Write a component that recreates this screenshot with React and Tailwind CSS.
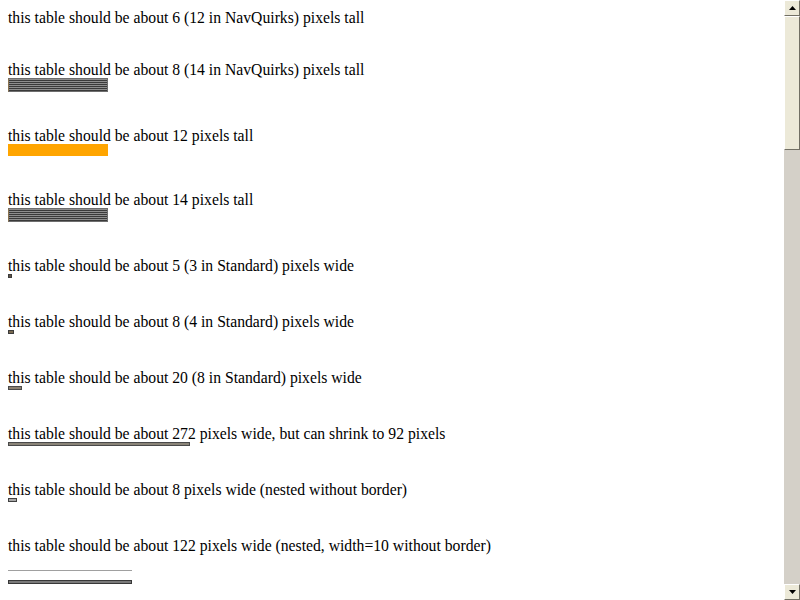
const stripes =
  "bg-[image:repeating-linear-gradient(to_bottom,#8e8e8e_0px,#8e8e8e_1px,#3a3a3a_1px,#3a3a3a_2px)]";

const Line = ({ children }) => (
  <p className="leading-[17px] whitespace-nowrap">{children}</p>
);

const Arrow = ({ down }) => (
  <svg width="7" height="4" viewBox="0 0 7 4" className="block">
    <path d={down ? "M0 0H7L3.5 4Z" : "M0 4H7L3.5 0Z"} fill="#000" />
  </svg>
);

const ScrollButton = ({ down }) => (
  <div className="h-[16px] w-[16px] flex items-center justify-center bg-[#ece9d8] border border-t-white border-l-white border-r-[#716f64] border-b-[#716f64]">
    <Arrow down={down} />
  </div>
);

const Scrollbar = () => (
  <div className="w-[16px] h-full flex flex-col bg-[#d4d0c8]">
    <ScrollButton />
    <div className="h-[134px] bg-[#ece9d8] border border-t-white border-l-white border-r-[#716f64] border-b-[#716f64]" />
    <div className="flex-1" />
    <ScrollButton down />
  </div>
);

export default function App() {
  return (
    <div className="w-[800px] h-[600px] flex overflow-hidden bg-white">
      <div className="flex-1 pl-2 pt-[9px] text-[15.7px] text-black font-['Liberation_Serif',serif]">
        <div className="mb-[35px]">
          <Line>this table should be about 6 (12 in NavQuirks) pixels tall</Line>
        </div>

        <div className="mb-[35px]">
          <Line>this table should be about 8 (14 in NavQuirks) pixels tall</Line>
          <div className={`w-[100px] h-[14px] border border-[#6e6e6e] border-l-[#8a7350] ${stripes}`} />
        </div>

        <div className="mb-[35px]">
          <Line>this table should be about 12 pixels tall</Line>
          <div className="w-[100px] h-[12px] bg-[#ffa500]" />
        </div>

        <div className="mb-[35px]">
          <Line>this table should be about 14 pixels tall</Line>
          <div className={`w-[100px] h-[14px] border border-[#6e6e6e] border-l-[#8a7350] ${stripes}`} />
        </div>

        <div className="mb-[35px]">
          <Line>this table should be about 5 (3 in Standard) pixels wide</Line>
          <div className="w-[4px] h-[4px] bg-[#5e5244] border border-[#3c3c3c]" />
        </div>

        <div className="mb-[35px]">
          <Line>this table should be about 8 (4 in Standard) pixels wide</Line>
          <div className="w-[6px] h-[4px] bg-[#7a6a50] border border-[#3c3c3c]" />
        </div>

        <div className="mb-[35px]">
          <Line>this table should be about 20 (8 in Standard) pixels wide</Line>
          <div className="w-[14px] h-[4px] bg-[#8a8070] border border-[#4a4a4a]" />
        </div>

        <div className="mb-[35px]">
          <Line>this table should be about 272 pixels wide, but can shrink to 92 pixels</Line>
          <div className="w-[182px] h-[4px] bg-[#8a8478] border border-[#4a4a4a]" />
        </div>

        <div className="mb-[35px]">
          <Line>this table should be about 8 pixels wide (nested without border)</Line>
          <div className="w-[9px] h-[4px] bg-[#a8a8a8] border border-[#404040]" />
        </div>

        <div>
          <Line>this table should be about 122 pixels wide (nested, width=10 without border)</Line>
          <div className="mt-[16px] w-[124px] h-[1px] bg-[#a0a0a0]" />
          <div className="mt-[9px] w-[124px] h-[4px] bg-[#7a7a7a] border border-[#383838]" />
        </div>
      </div>
      <Scrollbar />
    </div>
  );
}
